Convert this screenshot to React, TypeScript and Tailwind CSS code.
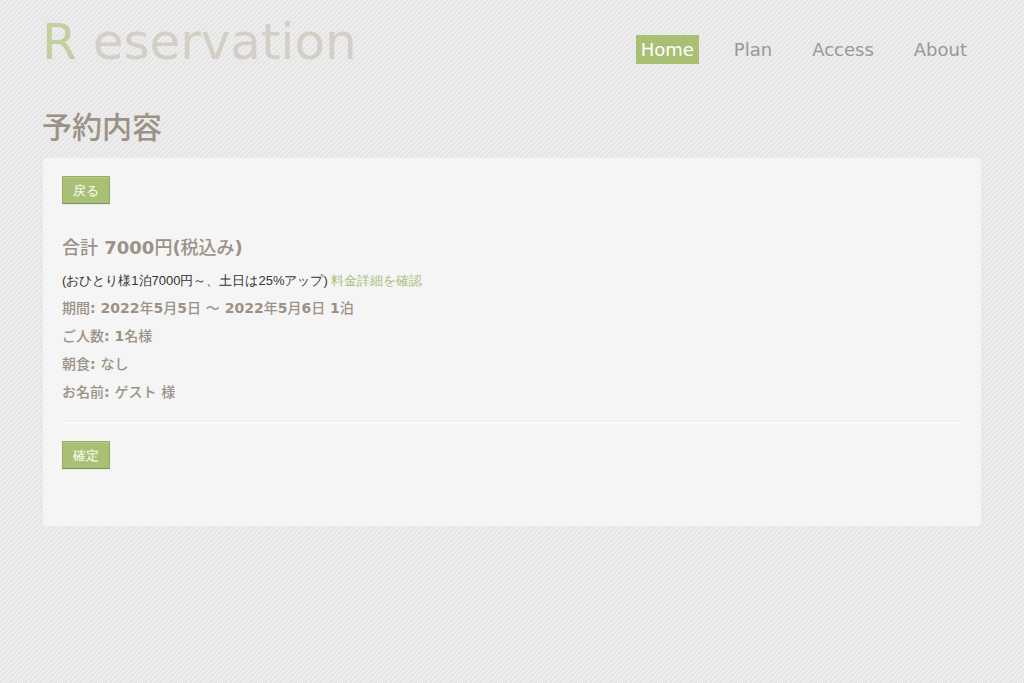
import React from "react";

const navItems = ["Home", "Plan", "Access", "About"];

const details = [
  "期間: 2022年5月5日 〜 2022年5月6日 1泊",
  "ご人数: 1名様",
  "朝食: なし",
  "お名前: ゲスト 様",
];

// Latin runs are set bold, Japanese runs in the medium weight.
function MixedText({ text }: { text: string }) {
  const runs = text.split(/([\u3000-\u9fff]+)/).filter(Boolean);
  return (
    <>
      {runs.map((run, index) =>
        /[\u3000-\u9fff]/.test(run) ? (
          <span key={index} className="font-['Noto_Sans_CJK_JP',sans-serif] leading-none font-medium">
            {run}
          </span>
        ) : (
          run
        ),
      )}
    </>
  );
}

function ActionButton({ children }: { children: React.ReactNode }) {
  return (
    <button
      type="button"
      className="block h-7 cursor-pointer border border-[#94ad67] border-b-[#7d9256] bg-[#a9bf74] px-2.5 pt-0.5 text-[13px] leading-5 text-white shadow-[inset_0_1px_0_rgba(255,255,255,0.2),0_1px_2px_rgba(0,0,0,0.05)]"
    >
      {children}
    </button>
  );
}

export default function App() {
  return (
    <div className="min-h-screen bg-[#e6e6e6] bg-[linear-gradient(135deg,transparent_45%,#f6f6f6_45%,#f6f6f6_55%,transparent_55%)] bg-size-[5px_5px] font-['Liberation_Sans',sans-serif] text-[13px] leading-5 text-[#333333]">
      <div className="mx-auto w-[92%] max-w-[940px]">
        <header className="flex h-[99px] items-start justify-between font-['DejaVu_Sans',sans-serif]">
          <a href="#" className="pt-3 text-[50px] leading-[60px] text-[#d3cec6]">
            <span className="text-[#c2d09f]">R</span> eservation
          </a>
          <nav className="flex gap-[30px] pt-[35px] pr-2.5 text-[18px] leading-[29px]">
            {navItems.map((item) => (
              <a
                key={item}
                href="#"
                className={item === "Home" ? "bg-[#a9bf74] px-[5px] text-white" : "px-[5px] text-[#999999]"}
              >
                {item}
              </a>
            ))}
          </nav>
        </header>
        <main>
          <h1 className="pt-1.5 pb-3 font-['Noto_Sans_CJK_JP',sans-serif] text-[30px] leading-10 font-medium text-[#9b9285]">
            予約内容
          </h1>
          <section className="rounded-[4px] border border-[#eaeaea] bg-[#f5f5f5] px-[19px] pt-[18px] pb-[57px]">
            <ActionButton>戻る</ActionButton>
            <h2 className="pt-[30px] font-['DejaVu_Sans',sans-serif] text-[18px] leading-7 font-bold text-[#9b9285]">
              <MixedText text="合計 7000円(税込み)" />
            </h2>
            <p className="pt-[9px]">
              (おひとり様1泊7000円～、土日は25%アップ){" "}
              <a href="#" className="text-[#a9bf74]">料金詳細を確認</a>
            </p>
            <div className="pt-[3px] font-['DejaVu_Sans',sans-serif] text-[14px] leading-7 font-bold text-[#9b9285]">
              {details.map((detail) => (
                <h3 key={detail}>
                  <MixedText text={detail} />
                </h3>
              ))}
            </div>
            <hr className="mt-[15px] mb-[18px] h-0 border-t border-b border-t-[#eeeeee] border-b-white" />
            <ActionButton>確定</ActionButton>
          </section>
        </main>
      </div>
    </div>
  );
}
